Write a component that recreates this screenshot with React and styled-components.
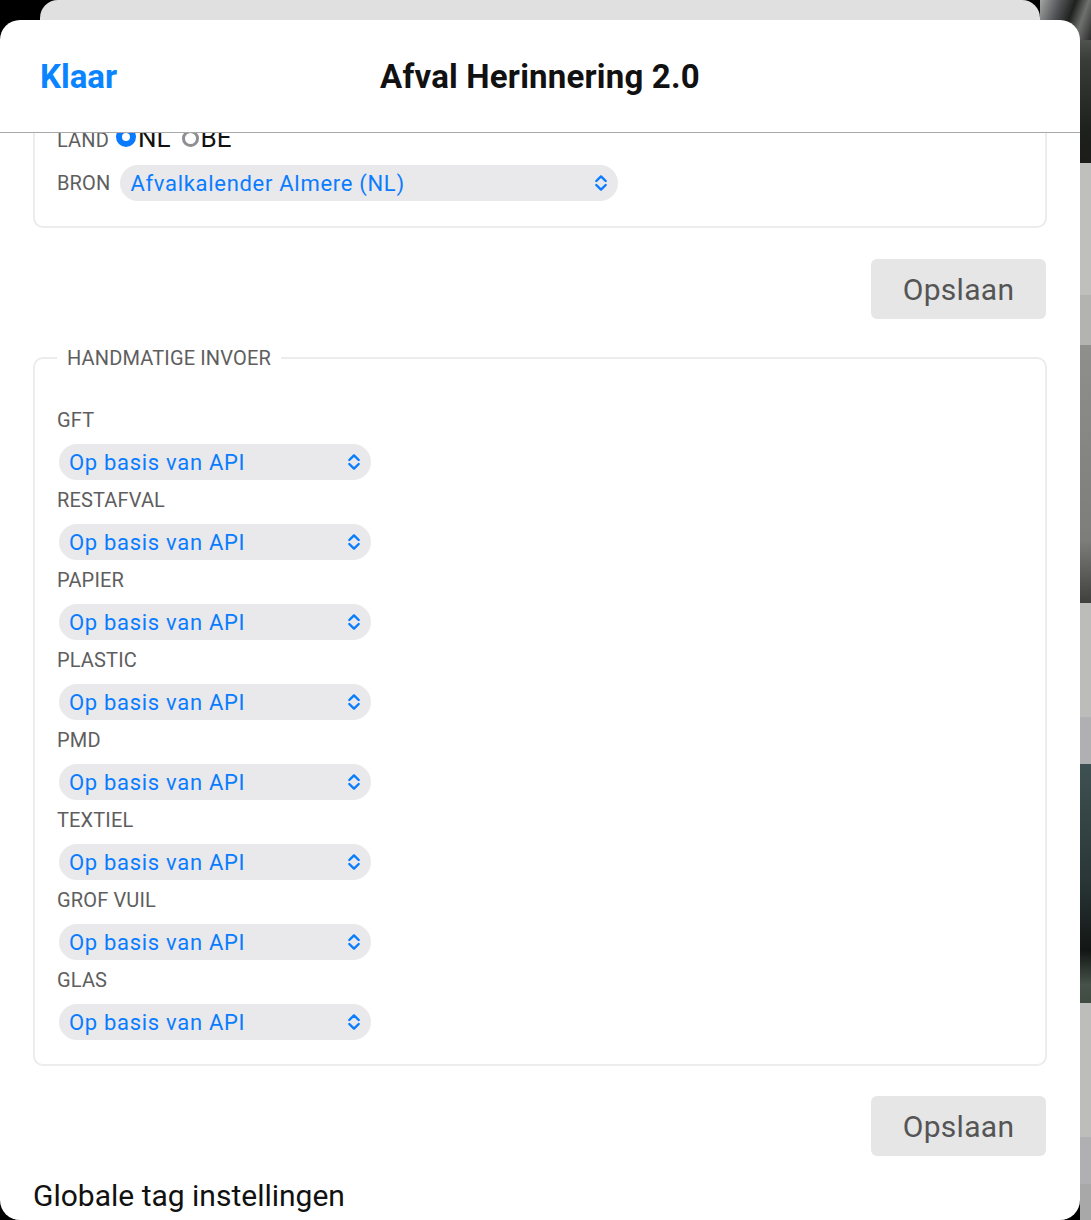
import React from "react";
import styled, { createGlobalStyle } from "styled-components";

const Global = createGlobalStyle`
  html, body { margin: 0; padding: 0; background: #000; }
  body { font-family: Roboto, "Noto Sans", sans-serif; -webkit-font-smoothing: antialiased; }
  * { box-sizing: border-box; }
`;

const Screen = styled.div`
  width: 1091px;
  height: 1220px;
  overflow: hidden;
  display: flex;
  flex-direction: column;
  background-color: #000;
  background-image:
    linear-gradient(110deg, #a4a6a4 0%, #55575a 30%, #1f211f 55%, #6f716f 75%, #2a2b2a 100%),
    linear-gradient(
      to bottom,
      #7c7e7c 0px, #3a3c3a 60px, #1e201e 130px, #1c1d1b 163px,
      #bfc0bd 163px, #bfc0bd 295px,
      #b3b4b2 295px, #b3b4b2 345px,
      #8f908e 345px, #7d7e7c 540px, #3f403e 603px,
      #bcbdbb 603px, #bcbdbb 717px,
      #b0b0b3 717px, #b0b0b3 764px,
      #3e5152 764px, #2a3637 880px, #121614 950px, #46524a 985px, #3f4a40 1003px,
      #bdbdbb 1003px, #bdbdbb 1137px,
      #b0b0b3 1137px, #b0b0b3 1184px,
      #a8a8a8 1184px, #a8a8a8 1220px
    );
  background-size: 51px 40px, 11px 100%;
  background-position: right top, right top;
  background-repeat: no-repeat;
`;

const BackSheet = styled.div`
  flex: none;
  width: 1000px;
  height: 40px;
  margin: 0 0 -20px 40px;
  background: #e0e0e0;
  border-radius: 18px 18px 0 0;
`;

const Sheet = styled.div`
  position: relative;
  flex: none;
  width: 1080px;
  height: 1200px;
  background: #fff;
  border-radius: 20px;
  overflow: hidden;
  display: flex;
  flex-direction: column;
`;

const Header = styled.header`
  flex: none;
  height: 113px;
  border-bottom: 1px solid #a9a9a9;
  display: grid;
  grid-template-columns: 1fr auto 1fr;
  align-items: center;
  padding: 0 40px;
`;

const DoneButton = styled.button`
  justify-self: start;
  border: none;
  background: none;
  padding: 0;
  font-family: Roboto, sans-serif;
  font-size: 33px;
  font-weight: 700;
  color: #0a84ff;
`;

const Title = styled.h1`
  margin: 0;
  font-size: 33px;
  font-weight: 700;
  letter-spacing: 0.2px;
  color: #111;
`;

const ScrollArea = styled.div`
  flex: 1;
  overflow: hidden;
`;

const ScrollInner = styled.div`
  margin-top: -37px;
  padding: 0 33px;
  display: flex;
  flex-direction: column;
`;

const Card = styled.div`
  border: 2px solid #ececec;
  border-radius: 10px;
  padding: 24px 22px 25px;
  display: flex;
  flex-direction: column;
  gap: 7px;
`;

const FieldRow = styled.div`
  display: flex;
  align-items: ${(p) => (p.$baseline ? "baseline" : "center")};
  height: 36px;
  gap: ${(p) => p.$gap ?? 10}px;
`;

const FieldLabel = styled.span`
  font-size: 20px;
  line-height: 24px;
  letter-spacing: 0.15px;
  color: #5e5e5e;
  text-transform: uppercase;
`;

const RadioGroup = styled.div`
  display: flex;
  align-items: baseline;
  gap: 11px;
`;

const RadioOption = styled.label`
  display: inline-flex;
  align-items: baseline;
  gap: 2px;
  font-size: 26px;
  line-height: 32px;
  color: #111;
`;

const Radio = styled.span`
  flex: none;
  display: inline-block;
  width: ${(p) => (p.$checked ? 20 : 17)}px;
  height: ${(p) => (p.$checked ? 20 : 17)}px;
  border-radius: 50%;
  background: #fff;
  border: ${(p) => (p.$checked ? "6px solid #0a7aff" : "3px solid #8e8e93")};
  margin-bottom: 2px;
`;

const Select = styled.div`
  flex: none;
  display: flex;
  align-items: center;
  justify-content: space-between;
  width: ${(p) => p.$width}px;
  height: 36px;
  margin-left: ${(p) => p.$offset || 0}px;
  padding: 0 10px 0 10px;
  border-radius: 18px;
  background: #e9e9eb;
  color: #0a7cff;
  font-size: 22px;
  letter-spacing: 0.7px;
`;

const SaveRow = styled.div`
  display: flex;
  justify-content: flex-end;
  margin-top: ${(p) => p.$gap ?? 31}px;
`;

const SaveButton = styled.button`
  width: 175px;
  height: 60px;
  margin-right: 1px;
  border: none;
  border-radius: 6px;
  background: #e6e6e6;
  font-family: Roboto, sans-serif;
  font-size: 30px;
  letter-spacing: 0.3px;
  color: #555;
`;

const Fieldset = styled.fieldset`
  margin: 27px 0 0;
  border: 2px solid #ececec;
  border-radius: 10px;
  padding: 38px 22px 24px;
  min-width: 0;
`;

const Legend = styled.legend`
  margin-left: 0;
  padding: 0 10px;
  font-size: 20px;
  line-height: 24px;
  letter-spacing: 0.15px;
  color: #5e5e5e;
`;

const ItemList = styled.div`
  display: flex;
  flex-direction: column;
  gap: 8px;
`;

const Item = styled.div`
  display: flex;
  flex-direction: column;
  gap: 12px;
`;

const SectionTitle = styled.h2`
  margin: 22px 0 0;
  font-size: 30px;
  line-height: 36px;
  font-weight: 400;
  color: #111;
`;

const Chevron = () => (
  <svg width="14" height="18" viewBox="0 0 14 18" fill="none" stroke="#0a7cff" strokeWidth="2.4" strokeLinecap="round" strokeLinejoin="round">
    <path d="M2.3 7 L7 2.4 L11.7 7" />
    <path d="M2.3 11 L7 15.6 L11.7 11" />
  </svg>
);

const categories = ["GFT", "Restafval", "Papier", "Plastic", "PMD", "Textiel", "Grof vuil", "Glas"];

export default function App() {
  return (
    <>
      <Global />
      <Screen>
        <BackSheet />
        <Sheet>
          <Header>
            <DoneButton>Klaar</DoneButton>
            <Title>Afval Herinnering 2.0</Title>
            <span />
          </Header>
          <ScrollArea>
            <ScrollInner>
              <Card>
                <FieldRow $baseline $gap={7}>
                  <FieldLabel>Land</FieldLabel>
                  <RadioGroup>
                    <RadioOption>
                      <Radio $checked />
                      NL
                    </RadioOption>
                    <RadioOption>
                      <Radio />
                      BE
                    </RadioOption>
                  </RadioGroup>
                </FieldRow>
                <FieldRow>
                  <FieldLabel>Bron</FieldLabel>
                  <Select $width={498}>
                    <span>Afvalkalender Almere (NL)</span>
                    <Chevron />
                  </Select>
                </FieldRow>
              </Card>
              <SaveRow>
                <SaveButton>Opslaan</SaveButton>
              </SaveRow>
              <Fieldset>
                <Legend>HANDMATIGE INVOER</Legend>
                <ItemList>
                  {categories.map((c) => (
                    <Item key={c}>
                      <FieldLabel>{c}</FieldLabel>
                      <Select $width={312} $offset={2}>
                        <span>Op basis van API</span>
                        <Chevron />
                      </Select>
                    </Item>
                  ))}
                </ItemList>
              </Fieldset>
              <SaveRow $gap={30}>
                <SaveButton>Opslaan</SaveButton>
              </SaveRow>
              <SectionTitle>Globale tag instellingen</SectionTitle>
            </ScrollInner>
          </ScrollArea>
        </Sheet>
      </Screen>
    </>
  );
}
